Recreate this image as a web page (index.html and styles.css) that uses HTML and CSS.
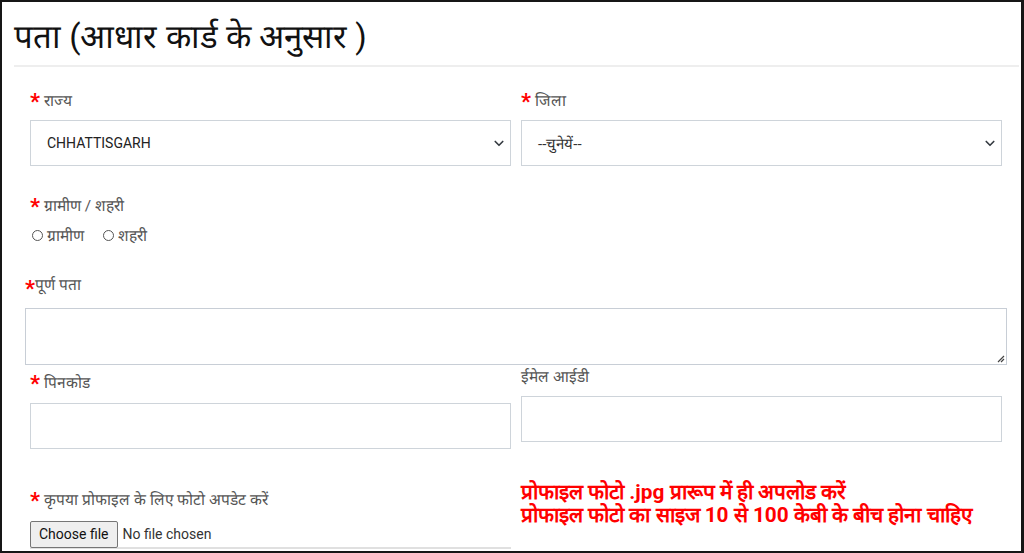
FILE: index.html
```html
<!DOCTYPE html>
<html lang="hi">
<head>
<meta charset="utf-8">
<link rel="stylesheet" href="styles.css">
</head>
<body>
<div class="frame">
  <h2 class="title">पता (आधार कार्ड के अनुसार )</h2>
  <div class="rule"></div>
  <div class="form">
    <div class="row r1">
      <div class="col">
        <label class="lbl"><span class="req">*</span> राज्य</label>
        <div class="select"><span>CHHATTISGARH</span><svg class="chev" viewBox="0 0 16 16" width="12" height="12"><path d="M3 6l5 5 5-5" fill="none" stroke="#343a40" stroke-width="2.2" stroke-linecap="round" stroke-linejoin="round"/></svg></div>
      </div>
      <div class="col">
        <label class="lbl"><span class="req">*</span> जिला</label>
        <div class="select"><span>--चुनेयें--</span><svg class="chev" viewBox="0 0 16 16" width="12" height="12"><path d="M3 6l5 5 5-5" fill="none" stroke="#343a40" stroke-width="2.2" stroke-linecap="round" stroke-linejoin="round"/></svg></div>
      </div>
    </div>
    <div class="r2">
      <label class="lbl"><span class="req">*</span> ग्रामीण / शहरी</label>
      <div class="radios">
        <span class="radio"><span class="dot"></span>ग्रामीण</span>
        <span class="radio"><span class="dot"></span>शहरी</span>
      </div>
    </div>
    <div class="r3">
      <label class="lbl lbl-tight"><span class="req">*</span>पूर्ण पता</label>
      <div class="textarea"><svg class="grip" viewBox="0 0 8 8" width="8" height="8"><path d="M7 1L1 7M7 4L4 7" stroke="#444" stroke-width="1.2"/></svg></div>
    </div>
    <div class="row r4">
      <div class="col">
        <label class="lbl"><span class="req">*</span> पिनकोड</label>
        <div class="input"></div>
      </div>
      <div class="col col-up">
        <label class="lbl">ईमेल आईडी</label>
        <div class="input"></div>
      </div>
    </div>
    <div class="row r5">
      <div class="col col-file">
        <label class="lbl"><span class="req">*</span> कृपया प्रोफाइल के लिए फोटो अपडेट करें</label>
        <div class="file"><span class="btn">Choose file</span><span class="nofile">No file chosen</span></div>
      </div>
      <div class="col">
        <p class="note">प्रोफाइल फोटो .jpg प्रारूप में ही अपलोड करें<br>प्रोफाइल फोटो का साइज 10 से 100 केबी के बीच होना चाहिए</p>
      </div>
    </div>
  </div>
</div>
</body>
</html>
```

FILE: styles.css
```css
* { box-sizing: border-box; }
html, body { margin: 0; padding: 0; background: #fff; }
body { font-family: "Roboto", "Liberation Sans", sans-serif; color: #555; }
.frame {
  width: 1024px;
  height: 553px;
  border: 2px solid #161616;
  border-right-width: 3px;
  overflow: hidden;
  position: relative;
}
.title {
  margin: 0;
  padding: 12px 0 0 12px;
  height: 63px;
  font-size: 33px;
  font-weight: 400;
  color: #111;
  line-height: 46px;
}
.rule {
  margin-left: 12px;
  margin-right: 2px;
  height: 2px;
  background: #eeeeee;
}
.form { padding: 0 16px 0 28px; }
.row { display: flex; gap: 10px; }
.col { width: 481px; display: flex; flex-direction: column; }
.lbl {
  display: flex;
  align-items: center;
  font-size: 15.5px;
  color: #555;
  height: 22px;
}
.req { color: #ff0000; font-size: 22px; font-weight: 700; margin-right: 4px; line-height: 1; position: relative; top: 2px; }
.r1 { margin-top: 22px; }
.r1 .lbl { margin-bottom: 9px; }
.select {
  height: 46px;
  border: 1px solid #ced4da;
  display: flex;
  align-items: center;
  justify-content: space-between;
  padding: 0 5px 0 16px;
  font-size: 14px;
  color: #222;
}
.r1 .col:last-child .select span { font-size: 15px; color: #333; }
.r2 { margin-top: 28px; }
.radios { display: flex; gap: 17px; margin-top: 8px; font-size: 15.5px; color: #555; }
.radio { display: flex; align-items: center; }
.dot { width: 11px; height: 11px; border: 1px solid #555; border-radius: 50%; margin: 0 4px 0 2px; }
.r3 { margin-top: 27px; margin-left: -5px; width: 982px; }
.lbl-tight .req { margin-right: 0; top: 5px; }
.textarea {
  margin-top: 13px;
  height: 57px;
  border: 1px solid #c8ced6;
  position: relative;
}
.grip { position: absolute; right: 1px; bottom: 1px; }
.r4 { margin-top: 0; }
.r4 .col .lbl { margin-top: 6px; margin-bottom: 10px; }
.r4 .col-up .lbl { margin-top: 0; margin-bottom: 9px; }
.input { height: 46px; border: 1px solid #ced4da; }
.r5 { margin-top: 24px; }
.col-file { padding-top: 15px; }
.col-file .lbl { margin-bottom: 11px; }
.file {
  display: flex;
  align-items: center;
  gap: 5px;
  height: 28px;
  border-bottom: 2px solid #e0e0e0;
  font-family: "Roboto", "Liberation Sans", sans-serif;
  font-size: 14px;
  color: #333;
}
.btn {
  height: 27px;
  padding: 0 8px;
  display: flex;
  align-items: center;
  background: #efefef;
  border: 1px solid #767676;
  border-radius: 2px;
  color: #111;
}
.note {
  margin: 0;
  padding-top: 8px;
  font-size: 20.8px;
  font-weight: 700;
  color: #ff0000;
  line-height: 23px;
}
```
